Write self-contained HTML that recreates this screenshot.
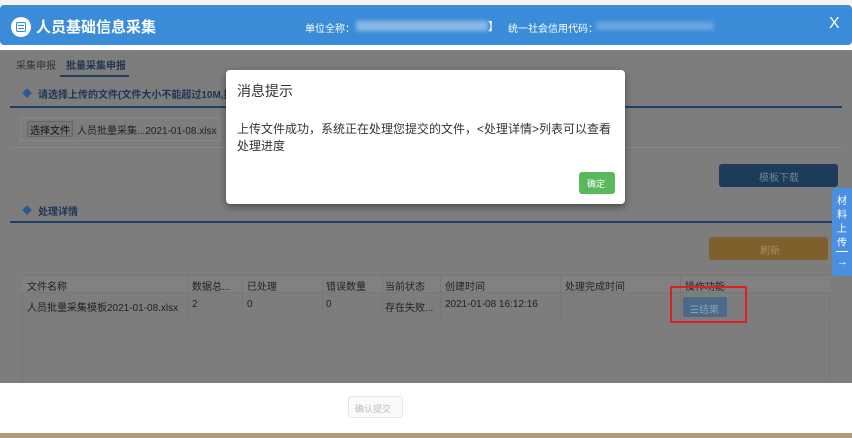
<!DOCTYPE html>
<html><head><meta charset="utf-8"><style>
*{margin:0;padding:0;box-sizing:border-box}
body{width:852px;height:438px;overflow:hidden;background:#fff;font-family:"Liberation Sans","Noto Sans CJK SC",sans-serif;position:relative}
.a{position:absolute}
.t{position:absolute;white-space:nowrap}
</style></head><body>
<div class="a" style="left:0;top:0;width:852px;height:5px;background:#f4f4f4"></div>
<div class="a" style="left:0;top:5px;width:852px;height:40px;background:#3a8bd8;border-radius:4px"></div>
<div class="a" style="left:11px;top:17px;width:20px;height:20px;border-radius:50%;background:#fff"></div>
<div class="a" style="left:16px;top:22px;width:10px;height:10px;border:1.5px solid #3a8bd8;border-radius:2px"></div>
<div class="a" style="left:18px;top:25px;width:6px;height:4px;border-top:1px solid #3a8bd8;border-bottom:1px solid #3a8bd8"></div>
<div class="t" style="left:36px;top:16px;font-size:15px;font-weight:bold;color:#fff">人员基础信息采集</div>
<div class="t" style="left:305px;top:20px;font-size:10px;color:#fff">单位全称：</div>
<div class="a" style="left:356px;top:21px;width:132px;height:10px;background:#8bb9e6;filter:blur(2px)"></div>
<div class="t" style="left:488px;top:18px;font-size:11px;color:#fff">】</div>
<div class="t" style="left:508px;top:20px;font-size:10px;color:#fff">统一社会信用代码：</div>
<div class="a" style="left:596px;top:22px;width:118px;height:8px;background:#6fa6e0;filter:blur(2px)"></div>
<div class="t" style="left:829px;top:15px;font-size:16px;color:#fff">X</div>

<div class="a" style="left:0;top:50px;width:852px;height:333px;background:#7d7d7d"></div>
<div class="t" style="left:16px;top:57px;font-size:10px;color:#333">采集申报</div>
<div class="t" style="left:66px;top:57px;font-size:10px;color:#1e3556;font-weight:bold">批量采集申报</div>
<div class="a" style="left:60px;top:75px;width:69px;height:2px;background:#1e3f6a"></div>
<div class="t" style="left:22px;top:85px;font-size:10px;color:#2a5a8a">◆</div>
<div class="t" style="left:38px;top:86px;font-size:10px;color:#1e3556;font-weight:bold">请选择上传的文件(文件大小不能超过10M,推</div>
<div class="a" style="left:10px;top:106px;width:832px;height:2px;background:#1e3f6a"></div>
<div class="a" style="left:20px;top:117px;width:200px;height:24px;border:1px solid #888"></div>
<div class="a" style="left:27px;top:121px;width:46px;height:16px;background:#777;border:1px solid #666"></div>
<div class="t" style="left:30px;top:122px;font-size:10px;color:#111">选择文件</div>
<div class="t" style="left:77px;top:122px;font-size:10px;color:#222">人员批量采集...2021-01-08.xlsx</div>
<div class="a" style="left:10px;top:147px;width:832px;height:1px;background:#888"></div>
<div class="a" style="left:719px;top:164px;width:119px;height:23px;background:#1d3c5c;border-radius:3px"></div>
<div class="t" style="left:759px;top:169px;font-size:10px;color:#6f8296">模板下载</div>
<div class="t" style="left:22px;top:202px;font-size:10px;color:#2a5a8a">◆</div>
<div class="t" style="left:38px;top:203px;font-size:10px;color:#1e3556;font-weight:bold">处理详情</div>
<div class="a" style="left:10px;top:221px;width:832px;height:2px;background:#1e3f6a"></div>
<div class="a" style="left:709px;top:237px;width:119px;height:23px;background:#7f5f2c;border-radius:3px"></div>
<div class="t" style="left:760px;top:242px;font-size:10px;color:#a88c60">刷新</div>

<div class="a" style="left:22px;top:275px;width:808px;height:108px;border-left:1px solid #777;border-right:1px solid #777"></div>
<div class="a" style="left:22px;top:275px;width:808px;height:18px;background:#818181;border-top:1px solid #777;border-bottom:1px solid #777"></div>
<div class="a" style="left:188px;top:275px;width:1px;height:43px;background:#777"></div>
<div class="a" style="left:242px;top:275px;width:1px;height:43px;background:#777"></div>
<div class="a" style="left:322px;top:275px;width:1px;height:43px;background:#777"></div>
<div class="a" style="left:382px;top:275px;width:1px;height:43px;background:#777"></div>
<div class="a" style="left:440px;top:275px;width:1px;height:43px;background:#777"></div>
<div class="a" style="left:560px;top:275px;width:1px;height:43px;background:#777"></div>
<div class="a" style="left:680px;top:275px;width:1px;height:43px;background:#777"></div>
<div class="t" style="left:27px;top:278px;font-size:10px;color:#222">文件名称</div>
<div class="t" style="left:192px;top:278px;font-size:10px;color:#222">数据总...</div>
<div class="t" style="left:247px;top:278px;font-size:10px;color:#222">已处理</div>
<div class="t" style="left:326px;top:278px;font-size:10px;color:#222">错误数量</div>
<div class="t" style="left:385px;top:278px;font-size:10px;color:#222">当前状态</div>
<div class="t" style="left:445px;top:278px;font-size:10px;color:#222">创建时间</div>
<div class="t" style="left:565px;top:278px;font-size:10px;color:#222">处理完成时间</div>
<div class="t" style="left:685px;top:278px;font-size:10px;color:#222">操作功能</div>
<div class="t" style="left:27px;top:299px;font-size:10px;color:#222">人员批量采集模板2021-01-08.xlsx</div>
<div class="t" style="left:192px;top:299px;font-size:10px;color:#222">2</div>
<div class="t" style="left:247px;top:299px;font-size:10px;color:#222">0</div>
<div class="t" style="left:326px;top:299px;font-size:10px;color:#222">0</div>
<div class="t" style="left:385px;top:299px;font-size:10px;color:#222">存在失败...</div>
<div class="t" style="left:445px;top:299px;font-size:10px;color:#222">2021-01-08 16:12:16</div>
<div class="a" style="left:22px;top:318px;width:808px;height:1px;background:#7a7a7a"></div>
<div class="a" style="left:683px;top:297px;width:44px;height:20px;background:#4b6a89;border-radius:2px"></div>
<div class="t" style="left:690px;top:301px;font-size:10px;color:#8aa0b8">☰结果</div>
<div class="a" style="left:670px;top:286px;width:77px;height:37px;border:2px solid #e02020"></div>

<div class="a" style="left:832px;top:188px;width:20px;height:88px;background:#4a90e2;border-radius:4px 0 0 4px"></div>
<div class="t" style="left:837px;top:192px;font-size:10px;color:#fff">材</div>
<div class="t" style="left:837px;top:206px;font-size:10px;color:#fff">料</div>
<div class="t" style="left:837px;top:220px;font-size:10px;color:#fff">上</div>
<div class="t" style="left:837px;top:234px;font-size:10px;color:#fff">传</div>
<div class="a" style="left:836px;top:251px;width:12px;height:1px;background:#fff"></div>
<div class="t" style="left:837px;top:256px;font-size:11px;color:#fff">→</div>

<div class="a" style="left:0;top:383px;width:852px;height:50px;background:#fff"></div>
<div class="a" style="left:348px;top:396px;width:55px;height:22px;border:1px solid #e6e6e6;background:#fafafa;border-radius:3px"></div>
<div class="t" style="left:355px;top:402px;font-size:9px;color:#bbb">确认提交</div>
<div class="a" style="left:0;top:433px;width:852px;height:5px;background:#b39a74"></div>

<div class="a" style="left:226px;top:70px;width:399px;height:134px;background:#fff;border-radius:4px;box-shadow:0 3px 8px rgba(0,0,0,.4)"></div>
<div class="t" style="left:237px;top:81px;font-size:14px;color:#333">消息提示</div>
<div class="t" style="left:237px;top:120px;font-size:12px;color:#333">上传文件成功，系统正在处理您提交的文件，&lt;处理详情&gt;列表可以查看</div>
<div class="t" style="left:237px;top:137px;font-size:12px;color:#333">处理进度</div>
<div class="a" style="left:579px;top:172px;width:36px;height:22px;background:#5cb85c;border-radius:3px"></div>
<div class="t" style="left:587px;top:177px;font-size:9px;color:#fff">确定</div>
</body></html>
